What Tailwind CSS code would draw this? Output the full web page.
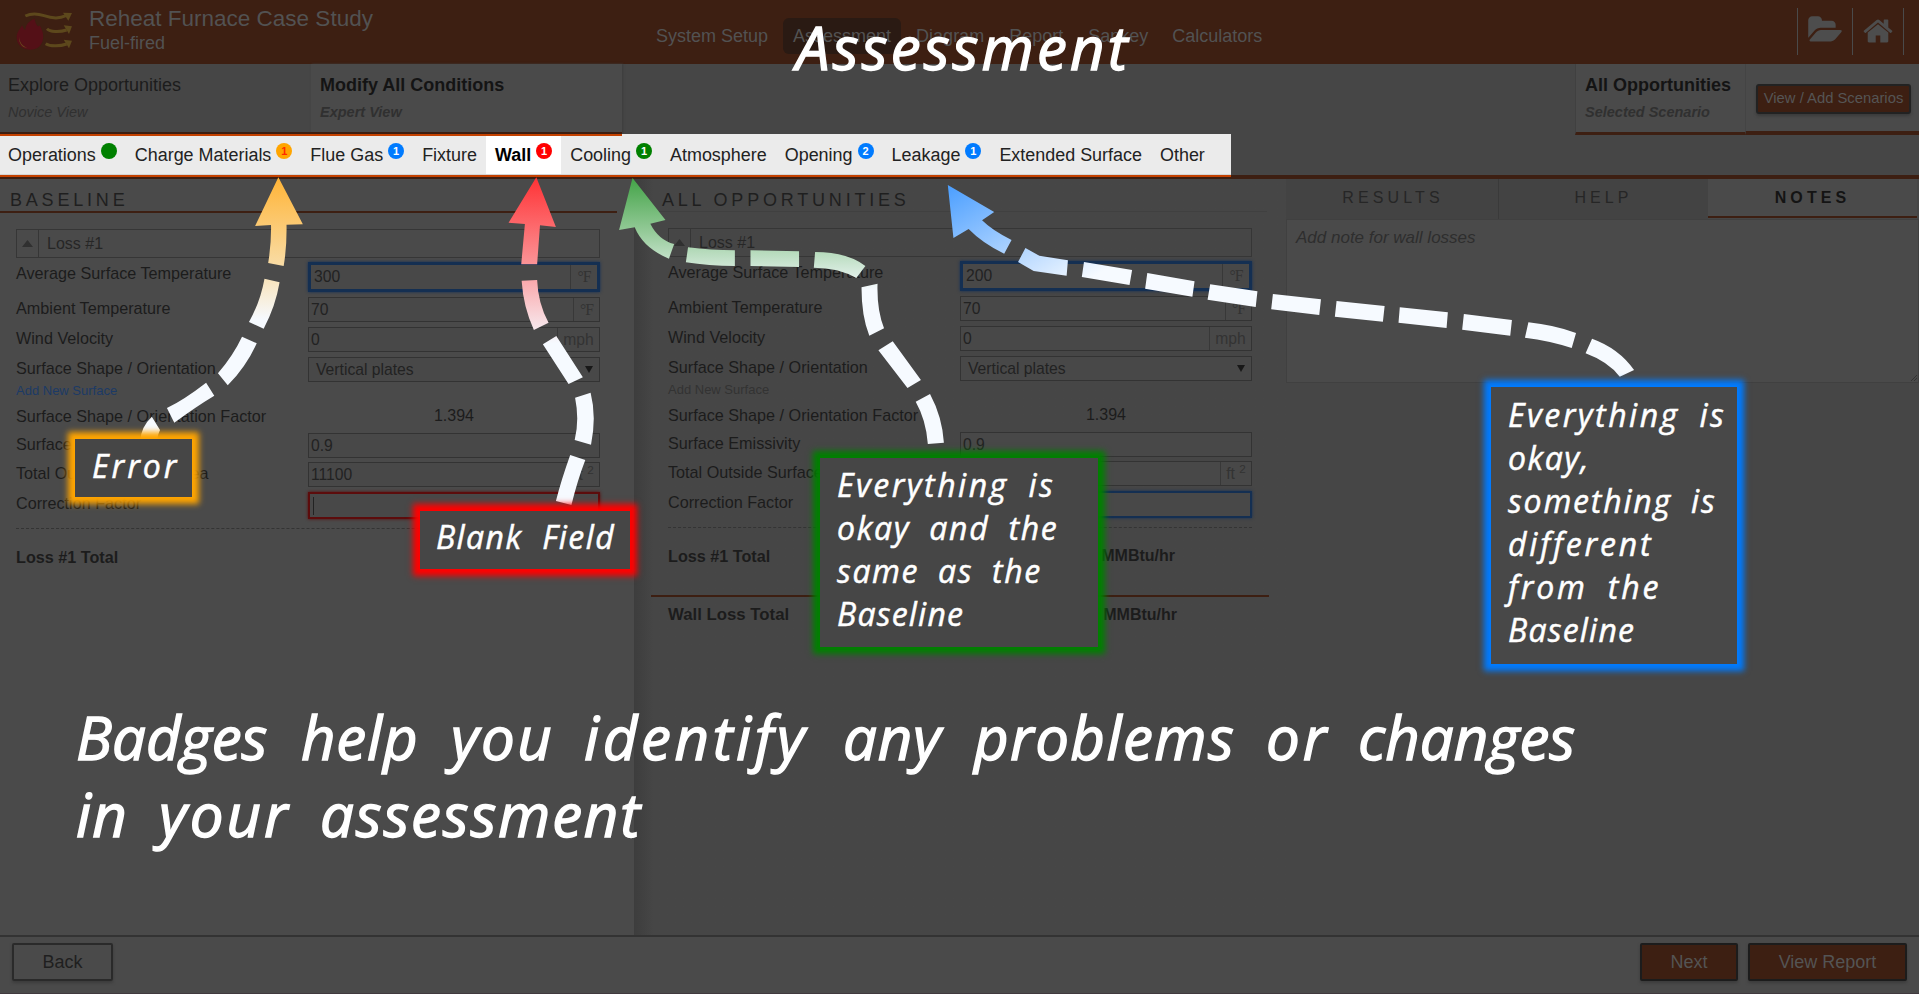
<!DOCTYPE html>
<html lang="en">
<head>
<meta charset="utf-8">
<title>Reheat Furnace Case Study</title>
<script src="https://cdn.jsdelivr.net/npm/@tailwindcss/browser@4"></script>
</head>
<body class="bg-[#464646]">
<div class="relative flex h-[994px] w-[1919px] flex-col overflow-hidden bg-[#464646] font-['Liberation_Sans',Arial,sans-serif] text-[#1c1c1c]">

  <!-- Title bar -->
  <header class="flex h-16 shrink-0 items-start bg-[#3d1f12] text-[#525252]">
    <svg class="ml-3 mt-2 h-[46px] w-[64px]" viewBox="36 24 192 138" fill="none">
      <path d="M104 56C106 74 116 84 119 76C125 88 132 101 129 117C126 138 111 149 90 149C66 149 50 134 50 112C50 96 60 88 66 76C70 82 70 88 76 90C77 75 86 62 104 56Z" fill="#541017"/>
      <path d="M57 110C58 126 68 140 82 143C68 144 56 130 57 110Z" fill="#6a4a1c"/>
      <path d="M76 48C96 38 112 40 132 47C155 55 175 58 198 47" stroke="#5d481c" stroke-width="9"/>
      <path d="M189 38L216 39L205 62Z" fill="#5d481c"/>
      <path d="M141 86C150 96 178 97 200 90" stroke="#5d481c" stroke-width="9"/>
      <path d="M191 76L216 79L207 102Z" fill="#5d481c"/>
      <path d="M137 131C150 139 178 140 200 132" stroke="#5d481c" stroke-width="9"/>
      <path d="M191 119L216 122L207 145Z" fill="#5d481c"/>
    </svg>
    <div class="ml-[13px] w-[557px]">
      <h1 class="mt-[6px] text-[22.5px] leading-[26px]">Reheat Furnace Case Study</h1>
      <p class="text-[18px] leading-[22px]">Fuel-fired</p>
    </div>
    <nav class="mt-[18px] flex gap-[5px] text-[18px] leading-9">
      <a class="px-[10px]">System Setup</a>
      <a class="rounded-md bg-[#2a1a13] px-[10px]">Assessment</a>
      <a class="px-[10px]">Diagram</a>
      <a class="px-[10px]">Report</a>
      <a class="px-[10px]">Sankey</a>
      <a class="pl-[9px] pr-[10px]">Calculators</a>
    </nav>
    <div class="ml-auto mr-[15px] mt-2 flex h-[47px] border-x border-[#4a4a4a]">
      <div class="flex w-[55px] justify-center border-r border-[#4a4a4a]">
        <svg class="mt-[6px] h-[32px] w-[34px]" viewBox="0 0 1879 1792" fill="#4d4d4d"><path d="M1879 952q0 31-31 66l-336 396q-43 51-120.5 86.5t-143.5 35.5h-1088q-34 0-60.5-13t-26.5-43q0-31 31-66l336-396q43-51 120.5-86.5t143.5-35.5h1088q34 0 60.5 13t26.5 43zm-343-344v160h-832q-94 0-197 47.5t-164 119.5l-337 396-5 6q0-4-.5-12.5t-.5-12.5v-960q0-92 66-158t158-66h320q92 0 158 66t66 158v32h544q92 0 158 66t66 158z"/></svg>
      </div>
      <div class="flex w-[50px] justify-center">
        <svg class="mt-[7px] h-[32px] w-[32px]" viewBox="0 0 1792 1792" fill="#4d4d4d"><path d="M1472 992v480q0 26-19 45t-45 19h-384v-384h-256v384h-384q-26 0-45-19t-19-45v-480q0-1 .5-3t.5-3l575-474 575 474q1 2 1 6zm223-69l-62 74q-8 9-21 11h-3q-13 0-21-7l-692-577-692 577q-12 8-24 7-13-2-21-11l-62-74q-8-10-7-23.5t11-21.5l719-599q32-26 76-26t76 26l244 204v-195q0-14 9-23t23-9h192q14 0 23 9t9 23v408l219 182q10 8 11 21.5t-7 23.5z"/></svg>
      </div>
    </div>
  </header>

  <!-- View selector -->
  <section class="flex h-[70px] shrink-0">
    <div class="h-[70px] w-[311px] border-b-2 border-[#3d1f12] bg-[#464646] pl-2 pt-[9px]">
      <p class="text-[18px] leading-6">Explore Opportunities</p>
      <p class="mt-[5px] text-[14.5px] italic leading-5 text-[#303030]">Novice View</p>
    </div>
    <div class="h-[70px] w-[311px] border-b-2 border-[#3d1f12] bg-[#4a4a4a] pl-[9px] pt-[9px] font-bold shadow-[1px_0_2px_#3c3c3c]">
      <p class="text-[18px] leading-6 text-[#141414]">Modify All Conditions</p>
      <p class="mt-[5px] text-[14.5px] italic leading-5 text-[#303030]">Expert View</p>
    </div>
    <div class="ml-auto h-[71px] w-[170px] border-b-3 border-l border-b-[#3d1f12] border-l-[#404040] bg-[#4a4a4a] pl-[9px] pt-[9px] font-bold">
      <p class="text-[18px] leading-6 text-[#141414]">All Opportunities</p>
      <p class="mt-[5px] text-[14.5px] italic leading-5 text-[#303030]">Selected Scenario</p>
    </div>
    <div class="h-[71px] w-[174px] border-b-4 border-l border-b-[#3d1f12] border-l-[#444] bg-[#4a4a4a] pl-[10px] pt-5">
      <div class="h-[30px] w-[155px] rounded-[3px] border-2 border-[#222] bg-[#3d1f12] text-center text-[14.8px] leading-[25px] text-[#555] shadow-[0_2px_3px_#3a3a3a]">View / Add Scenarios</div>
    </div>
  </section>

  <!-- Highlighted loss tabs -->
  <section class="flex h-[45px] shrink-0">
    <div class="flex h-[43px] w-[1231px] flex-col bg-[#ebebeb]">
      <div class="h-[2px] w-[622px] shrink-0 bg-[#c44100]"></div>
      <div class="flex h-[39px] border-b border-[#d5d5d5] text-[17.95px] leading-[38px] text-[#222]">
        <div class="flex pl-2 pr-[9px]">Operations<i class="ml-[5px] mt-[7px] size-4 rounded-full bg-[#008000]"></i></div>
        <div class="flex px-[9px]">Charge Materials<i class="ml-[5px] mt-[7px] size-4 rounded-full bg-[#ffa500] text-center text-[11px] font-bold not-italic leading-4 text-[#ff2a00]">1</i></div>
        <div class="flex px-[9px]">Flue Gas<i class="ml-[5px] mt-[7px] size-4 rounded-full bg-[#007bff] text-center text-[11px] font-bold not-italic leading-4 text-white">1</i></div>
        <div class="px-[9px]">Fixture</div>
        <div class="flex bg-white px-[9px] font-bold text-black">Wall<i class="ml-[5px] mt-[7px] size-4 rounded-full bg-[#ff0000] text-center text-[11px] not-italic leading-4 text-white">1</i></div>
        <div class="flex px-[9px]">Cooling<i class="ml-[5px] mt-[7px] size-4 rounded-full bg-[#008000] text-center text-[11px] font-bold not-italic leading-4 text-white">1</i></div>
        <div class="px-[9px]">Atmosphere</div>
        <div class="flex px-[9px]">Opening<i class="ml-[5px] mt-[7px] size-4 rounded-full bg-[#007bff] text-center text-[11px] font-bold not-italic leading-4 text-white">2</i></div>
        <div class="flex px-[9px]">Leakage<i class="ml-[5px] mt-[7px] size-4 rounded-full bg-[#007bff] text-center text-[11px] font-bold not-italic leading-4 text-white">1</i></div>
        <div class="px-[9px]">Extended Surface</div>
        <div class="px-[9px]">Other</div>
      </div>
      <div class="h-[2px] shrink-0 bg-[#c44100]"></div>
      <div class="h-[2px] shrink-0 bg-[#3d1f12]"></div>
    </div>
    <div class="h-[45px] flex-1 border-b-4 border-[#3d1f12]"></div>
  </section>

  <!-- Working panels -->
  <main class="flex h-[756px] shrink-0">
    <section class="w-[634px] bg-[#4a4a4a]">
      <h2 class="h-[34px] w-[617px] border-b-2 border-[#3d1f12] pl-[10px] pt-[8px] text-[18px] leading-[26px] tracking-[3.8px] text-[#1f1f1f]">BASELINE</h2>
      <div id="baseline" class="ml-4 mt-[16px] w-[584px]"></div>
    </section>
    <section class="w-[652px] bg-linear-to-r from-[#3d3d3d] via-[#464646] via-3% to-[#464646]">
      <h2 class="h-[33px] w-[633px] border-b border-[#404040] pl-[28px] pt-[8px] text-[18px] leading-[26px] tracking-[3.800px] text-[#1f1f1f]">ALL OPPORTUNITIES</h2>
      <div id="modified" class="ml-[34px] mt-[16px] w-[584px]"></div>
      <div class="ml-[17px] mt-[27px] flex w-[618px] border-t-2 border-[#3d1f12] pl-[17px] pt-[6px] font-bold leading-6">
        <span class="text-[16.8px]">Wall Loss Total</span><span class="ml-auto mr-[92px]">4.57 MMBtu/hr</span>
      </div>
    </section>
    <aside class="w-[633px]">
      <div class="flex h-10 text-center leading-[37px] tracking-[4.100px] text-[#262626]">
        <div class="w-[213px] border-r border-[#3a3a3a] bg-[#434343] pl-[2px]">RESULTS</div>
        <div class="w-[209px] bg-[#434343]">HELP</div>
        <div class="h-[39px] w-[209px] border-b-2 border-[#3d1f12] bg-[#4a4a4a] font-bold text-[#141414]">NOTES</div>
      </div>
      <div class="relative h-[164px] border border-[#404040] bg-[#4a4a4a] pl-[9px] pt-[7px] text-[17px] italic leading-[22px] text-[#2e2e2e]">Add note for wall losses
        <svg class="absolute bottom-0 right-0 size-2" viewBox="0 0 8 8" stroke="#333"><path d="M1 7L7 1M4 7L7 4"/></svg>
      </div>
    </aside>
  </main>

  <!-- Footer -->
  <footer class="flex h-[59px] shrink-0 border-t-2 border-b border-b-[#40393e] border-t-[#333] bg-[#4a4a4a] pt-[6px] text-[18px] leading-[35px]">
    <div class="ml-3 h-[38px] w-[101px] rounded-[2px] border-2 border-[#2a2a2a] text-center text-[#1f1f1f] shadow-[0_2px_3px_#3c3c3c]">Back</div>
    <div class="ml-auto h-[38px] w-[98px] rounded-[2px] border-2 border-[#1c1c1c] bg-[#3d1f12] text-center text-[#545454] shadow-[0_2px_3px_#3c3c3c]">Next</div>
    <div class="ml-[10px] mr-[12px] h-[38px] w-[159px] rounded-[2px] border-2 border-[#1c1c1c] bg-[#3d1f12] text-center text-[#545454] shadow-[0_2px_3px_#3c3c3c]">View Report</div>
  </footer>

  <!-- Tutorial arrows -->
  <svg class="absolute left-0 top-0" width="1919" height="994" viewBox="0 0 1919 994">
    <defs>
      <linearGradient id="amber" gradientUnits="userSpaceOnUse" x1="0" y1="-128" x2="0" y2="300"><stop offset="0" stop-color="#ffb437"/><stop offset=".6" stop-color="#f9dba2"/><stop offset="1" stop-color="#f6faff"/></linearGradient>
      <linearGradient id="red" gradientUnits="userSpaceOnUse" x1="0" y1="-128" x2="0" y2="370"><stop offset="0" stop-color="#ff3235"/><stop offset=".52" stop-color="#fb9396"/><stop offset="1" stop-color="#f6faff"/></linearGradient>
      <linearGradient id="green" gradientUnits="userSpaceOnUse" x1="0" y1="-126" x2="0" y2="210"><stop offset="0" stop-color="#43a347"/><stop offset=".5" stop-color="#98cc9c"/><stop offset="1" stop-color="#f6faff"/></linearGradient>
      <linearGradient id="blue" gradientUnits="userSpaceOnUse" x1="802" y1="-105" x2="1060" y2="230"><stop offset="0" stop-color="#4a9eff"/><stop offset="1" stop-color="#f6faff"/></linearGradient>
    </defs>
    <g transform="translate(0 220) scale(.40816 .33333)">
      <path fill="url(#amber)" d="M682-128L742 13L702 14Q703 80 695 138L657 129Q665 70 664 15L625 18ZM648 176L685 187Q675 260 646 326L610 306Q638 245 648 176ZM593 350L629 370Q603 440 558 496L534 460Q572 405 593 350ZM505 488L525 527Q480 560 427 608L409 564Q450 540 505 488ZM372 590L392 630Q386 645 385 660L344 660Q346 620 372 590Z"/>
      <path fill="url(#red)" d="M1314-128L1362 21L1323 16L1316 133L1277 133L1286 12L1246 8ZM1278 182L1316 180Q1318 250 1344 308L1308 330Q1282 260 1278 182ZM1363 348L1428 472L1393 492L1330 373ZM1409 533L1447 518Q1462 590 1448 674L1408 660Q1420 600 1409 533ZM1397 705L1434 720Q1415 780 1400 855L1362 843Q1375 780 1397 705Z"/>
    </g>
    <g transform="translate(600 220) scale(.43367 .33333)">
      <path fill="url(#green)" d="M75-126L151 0L116 11Q135 60 171 72L159 116Q100 85 80 22L44 30ZM203 82Q255 91 311 91L311 138Q250 138 198 127ZM347 91L459 94L459 141L347 138ZM496 96Q570 96 612 138L591 174Q550 143 493 143ZM603 202L640 191Q638 270 655 325L621 347Q603 290 603 202ZM675 364L740 480L709 504L642 391ZM728 545L761 522Q789 590 793 668L756 672Q752 600 728 545Z"/>
      <path fill="url(#blue)" d="M802-105L909-24L881 1Q905 32 949 60L932 101Q882 70 850 27L815 54ZM981 84L1013 107L1079 121L1076 167L1000 153L964 126ZM1116 126L1227 150L1221 195L1111 171ZM1262 159L1371 184L1366 230L1257 206ZM1407 193L1516 214L1512 261L1401 239Z"/>
    </g>
    <path transform="translate(1240 220) scale(.43304 .33333)" fill="#f6faff" d="M76 222L187 238L183 285L72 268ZM223 243L334 258L330 305L219 290ZM369 262L480 277L477 324L366 308ZM517 282L628 300L624 347L513 329ZM666 307Q725 315 776 339L766 384Q715 362 658 353ZM813 356Q875 385 910 450L877 470Q850 425 798 400Z"/>
  </svg>

  <!-- Tutorial captions -->
  <div class="font-['Open_Sans','Noto_Sans',sans-serif] italic text-white">
    <div class="absolute left-[796px] top-[7px] text-[60px] leading-[80px] tracking-[3.100px] [-webkit-text-stroke:1.4px_white]">Assessment</div>
    <div class="[-webkit-text-stroke:0.5px_white]">
      <div class="absolute left-[75px] top-[439px] h-[58px] w-[117px] bg-[#464646] pl-[17px] pt-[5px] text-[32px] leading-[43px] tracking-[3px] shadow-[0_0_6px_7px_#ffa500]">Error</div>
      <div class="absolute left-[420px] top-[511px] h-[58px] w-[210px] whitespace-nowrap bg-[#464646] pl-[16px] pt-[5px] text-[32px] leading-[42px] tracking-[1.400px] shadow-[0_0_6px_7px_#ff0000] [word-spacing:10px]">Blank Field</div>
      <div class="absolute left-[820px] top-[458px] h-[189px] w-[278px] whitespace-nowrap bg-[#464646] pl-[17px] pt-[5px] text-[32px] leading-[43px] shadow-[0_0_6px_7px_#008000] [word-spacing:9px]">
        <p class="tracking-[2.500px]">Everything is</p>
        <p class="tracking-[1.700px]">okay and the</p>
        <p class="tracking-[1.600px]">same as the</p>
        <p class="tracking-[1.200px]">Baseline</p>
      </div>
      <div class="absolute left-[1491px] top-[387px] h-[277px] w-[246px] whitespace-nowrap bg-[#484848] pl-[17px] pt-[6px] text-[32px] leading-[43px] shadow-[0_0_6px_7px_#007bff] [word-spacing:9px]">
        <p class="tracking-[2.500px]">Everything is</p>
        <p class="tracking-[1.500px]">okay,</p>
        <p class="tracking-[1.800px]">something is</p>
        <p class="tracking-[2.800px]">different</p>
        <p class="tracking-[2.800px]">from the</p>
        <p class="tracking-[1.200px]">Baseline</p>
      </div>
    </div>
    <div class="absolute left-[76px] top-[699px] whitespace-nowrap text-[60px] leading-[77px] [-webkit-text-stroke:1.4px_white]">
      <p class="flex">
        <span class="w-[225px]">Badges </span>
        <span class="w-[150px] tracking-[0.800px]">help </span>
        <span class="w-[133px] tracking-[2.400px]">you </span>
        <span class="w-[259px] tracking-[3.600px]">identify </span>
        <span class="w-[131px] tracking-[0.800px]">any </span>
        <span class="w-[292px] tracking-[1.400px]">problems </span>
        <span class="w-[92px] tracking-[3px]">or </span>
        <span>changes</span>
      </p>
      <p class="flex">
        <span class="w-[83px] tracking-[1px]">in </span>
        <span class="w-[161px] tracking-[3px]">your </span>
        <span class="tracking-[1.800px]">assessment</span>
      </p>
    </div>
  </div>
</div>

<script>
  const unit = (text, w, font) => `<span class="flex h-full items-center justify-center border-l border-[#383838] text-[#333] ${font}" style="width:${w}px">${text}</span>`;
  const deg = w => unit('°F', w, "font-['Liberation_Serif',serif] tracking-[-1px]");
  const row = (label, value, end, height, box) => `
    <div class="flex justify-between" style="height:${height}px">
      <span class="whitespace-nowrap text-[16.2px] leading-[27px]">${label}</span>
      <div class="mt-[2px] flex w-[292px] justify-between bg-[#484848] text-[15.7px] leading-[22px] text-[#222] ${box}">
        <span class="flex items-center">${value}</span>${end}
      </div>
    </div>`;
  const plain = 'h-[25px] border border-[#333] pl-[2px]';
  const blue = 'h-[30px] border-3 border-[#142f52] pl-[3px] shadow-[0_0_3px_#14305a]';
  const blueLow = 'h-[27px] border-2 border-[#142f52] pl-[2px] shadow-[0_0_3px_#14305a]';
  const red = 'h-[27px] border-2 border-[#5c0c0c] pl-[2px] shadow-[0_0_3px_#5c0c0c]';
  const form = (temp, link, lastBox, caret, total) => `
    <div class="flex h-[29px] border border-[#363636] leading-[27px] text-[#262626]">
      <span class="flex w-[22px] items-center justify-center border-r border-[#363636]"><svg class="h-[7px] w-[11px]" viewBox="0 0 11 7"><path d="M0 7L5.500 0L11 7Z" fill="#303030"/></svg></span>
      <span class="pl-[8px]">Loss #1</span>
    </div>
    <div class="h-[2px]"></div>
    ${row('Average Surface Temperature', temp, deg(27), 35, blue)}
    ${row('Ambient Temperature', '70', deg(26), 30, plain)}
    ${row('Wind Velocity', '0', unit('mph', 42, ''), 30, plain)}
    ${row('Surface Shape / Orientation', '<span class="pl-[5px]">Vertical plates</span>', '<svg class="mr-[6px] mt-[8px] h-[7px] w-[8px]" viewBox="0 0 8 7"><path d="M0 0H8L4 7Z" fill="#181818"/></svg>', 30, plain)}
    <div class="h-[17px] text-[13px] leading-[11px] ${link}">Add New Surface</div>
    <div class="flex h-[29px] justify-between leading-7"><span class="text-[16.2px]">Surface Shape / Orientation Factor</span><span class="w-[292px] text-center">1.394</span></div>
    ${row('Surface Emissivity', '0.9', '', 29, plain)}
    ${row('Total Outside Surface Area', '11100', unit('<span>ft <sup>2</sup></span>', 31, ''), 30, plain)}
    ${row('Correction Factor', caret, '', 38, lastBox)}
    <div class="flex h-[41px] items-end border-t border-dashed border-[#343434] font-bold leading-6"><span class="text-[16.2px]">Loss #1 Total</span><span class="ml-auto mr-[77px]">${total}</span></div>`;
  document.getElementById('baseline').innerHTML = form('300', 'text-[#1c3a66]', red, '<i class="ml-px h-[18px] w-px bg-[#222]"></i>', '');
  document.getElementById('modified').innerHTML = form('200', 'text-[#333]', blueLow, '', '4.57 MMBtu/hr');
</script>
</body>
</html>
